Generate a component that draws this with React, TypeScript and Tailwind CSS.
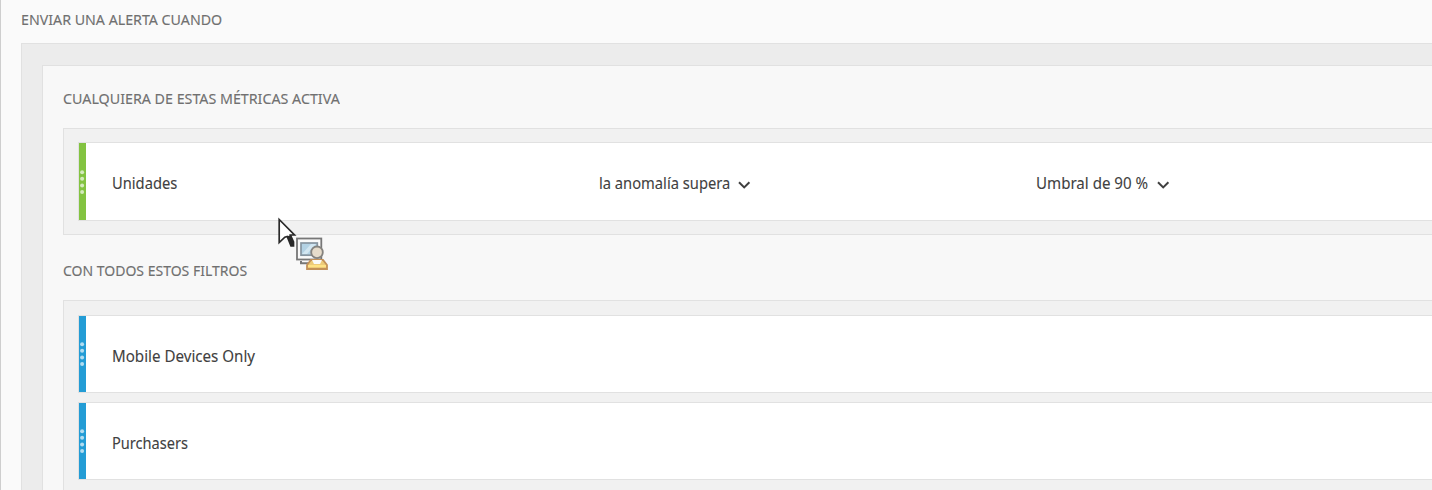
import { useLayoutEffect, useRef, useState } from "react";
import type { ReactNode } from "react";

type TextProps = { children: string; width: number; className?: string };

/** Condenses a line of text horizontally to the given width. */
function FitText({ children, width, className = "" }: TextProps) {
  const ref = useRef<HTMLSpanElement>(null);
  const [scale, setScale] = useState(1);
  useLayoutEffect(() => {
    if (ref.current) setScale(width / ref.current.offsetWidth);
  }, [width, children]);
  return (
    <span className="block shrink-0" style={{ width }}>
      <span
        ref={ref}
        className={`inline-block origin-left whitespace-nowrap ${className}`}
        style={{ transform: `scaleX(${scale})` }}
      >
        {children}
      </span>
    </span>
  );
}

function Heading({ children, width }: TextProps) {
  return (
    <h2 className="h-5 text-[14px] leading-5 text-[#707070] [-webkit-text-stroke:0.12px_#707070]">
      <FitText width={width}>{children}</FitText>
    </h2>
  );
}

function Chevron() {
  return (
    <svg width="14" height="10" viewBox="0 0 14 10" className="mt-[4px] ml-[7px]" fill="none">
      <path d="M2 2.2 7.2 7.4 12.4 2.2" stroke="#3f3f3f" strokeWidth="2" />
    </svg>
  );
}

type RowProps = { name: string; width: number; green?: boolean; children?: ReactNode };

function Row({ name, width, green = false, children }: RowProps) {
  return (
    <div
      className={`flex border border-r-0 border-[#e1e1e1] bg-white text-[16.5px] leading-6 text-[#414141] [-webkit-text-stroke:0.1px_#414141] ${green ? "h-[79px]" : "h-[78px]"}`}
    >
      <div className={`flex w-[7px] shrink-0 items-center ${green ? "bg-[#83c341]" : "bg-[#239cd5]"}`}>
        <svg width="7" height="26" viewBox="0 0 7 26" fill="#fff" fillOpacity="0.65">
          <circle cx="3.1" cy="3.2" r="2" />
          <circle cx="3.1" cy="9.8" r="2" />
          <circle cx="3.1" cy="16.4" r="2" />
          <circle cx="3.1" cy="23" r="2" />
        </svg>
      </div>
      <div className="flex items-center pt-[3px] pl-[26px]">
        <div className="w-[487px]">
          <FitText width={width}>{name}</FitText>
        </div>
        {children}
      </div>
    </div>
  );
}

function Cursor() {
  return (
    <svg className="absolute top-[216px] left-[275px]" width="54" height="56" viewBox="0 0 54 56">
      <path
        d="M3.2 3.5V26.5L8.8 21.2 11.2 20.5 15 29.8H17.5V26L14.4 19H18.5Z"
        fill="#fff"
        stroke="#292929"
        strokeWidth="1.7"
      />
      <path d="m11.2 20.5 3.8 9.3h2.5V26l-3.1-7Z" fill="#292929" />
      <path d="M25 45v2.3h8" stroke="#777" strokeWidth="2" fill="none" />
      <rect x="21" y="22.5" width="24.3" height="21" fill="#fafafa" stroke="#777" strokeWidth="1.8" />
      <rect x="25" y="27" width="16.3" height="12.2" fill="#b3d2e4" stroke="#8795a0" strokeWidth="1.7" />
      <path d="m26 38 9-10h5L31 38h-5Z" fill="#d2e6f1" />
      <path d="M31 53v-4l4-5h12l4 5v4Z" fill="#edcb79" stroke="#c39158" strokeWidth="1.8" />
      <path d="M32 50h18" stroke="#ffe284" strokeWidth="2" />
      <path d="m36 44 2 4h6l2-4Z" fill="#fafafa" />
      <circle cx="41" cy="36.3" r="5.8" fill="#e6dccb" stroke="#85837f" strokeWidth="1.8" />
    </svg>
  );
}

export default function App() {
  return (
    <main className="relative h-[490px] w-full overflow-hidden border-l border-[#cecece] bg-[#fafafa] pt-[10px] pl-5 font-['Noto_Sans',sans-serif]">
      <Heading width={201}>ENVIAR UNA ALERTA CUANDO</Heading>
      <section className="mt-[13px] h-[500px] border-t border-l border-[#e1e1e1] bg-[#ececec] pt-[21px] pl-5">
        <div className="h-[500px] border-t border-l border-[#e1e1e1] bg-[#f8f8f8] pt-[23px] pl-5">
          <Heading width={277}>CUALQUIERA DE ESTAS MÉTRICAS ACTIVA</Heading>
          <div className="mt-[19px] h-[107px] border border-r-0 border-[#e1e1e1] bg-[#f1f1f1] pt-[13px] pl-[14px]">
            <Row name="Unidades" width={65} green>
              <div className="flex w-[437px] items-center">
                <FitText width={131}>la anomalía supera</FitText>
                <Chevron />
              </div>
              <div className="flex items-center">
                <FitText width={112.5}>Umbral de 90 %</FitText>
                <Chevron />
              </div>
            </Row>
          </div>
          <div className="mt-[26px]">
            <Heading width={184}>CON TODOS ESTOS FILTROS</Heading>
          </div>
          <div className="mt-[19px] flex h-[220px] flex-col gap-[9px] border border-r-0 border-[#e1e1e1] bg-[#f1f1f1] pt-[14px] pl-[14px]">
            <Row name="Mobile Devices Only" width={143} />
            <Row name="Purchasers" width={76} />
          </div>
        </div>
      </section>
      <Cursor />
    </main>
  );
}
